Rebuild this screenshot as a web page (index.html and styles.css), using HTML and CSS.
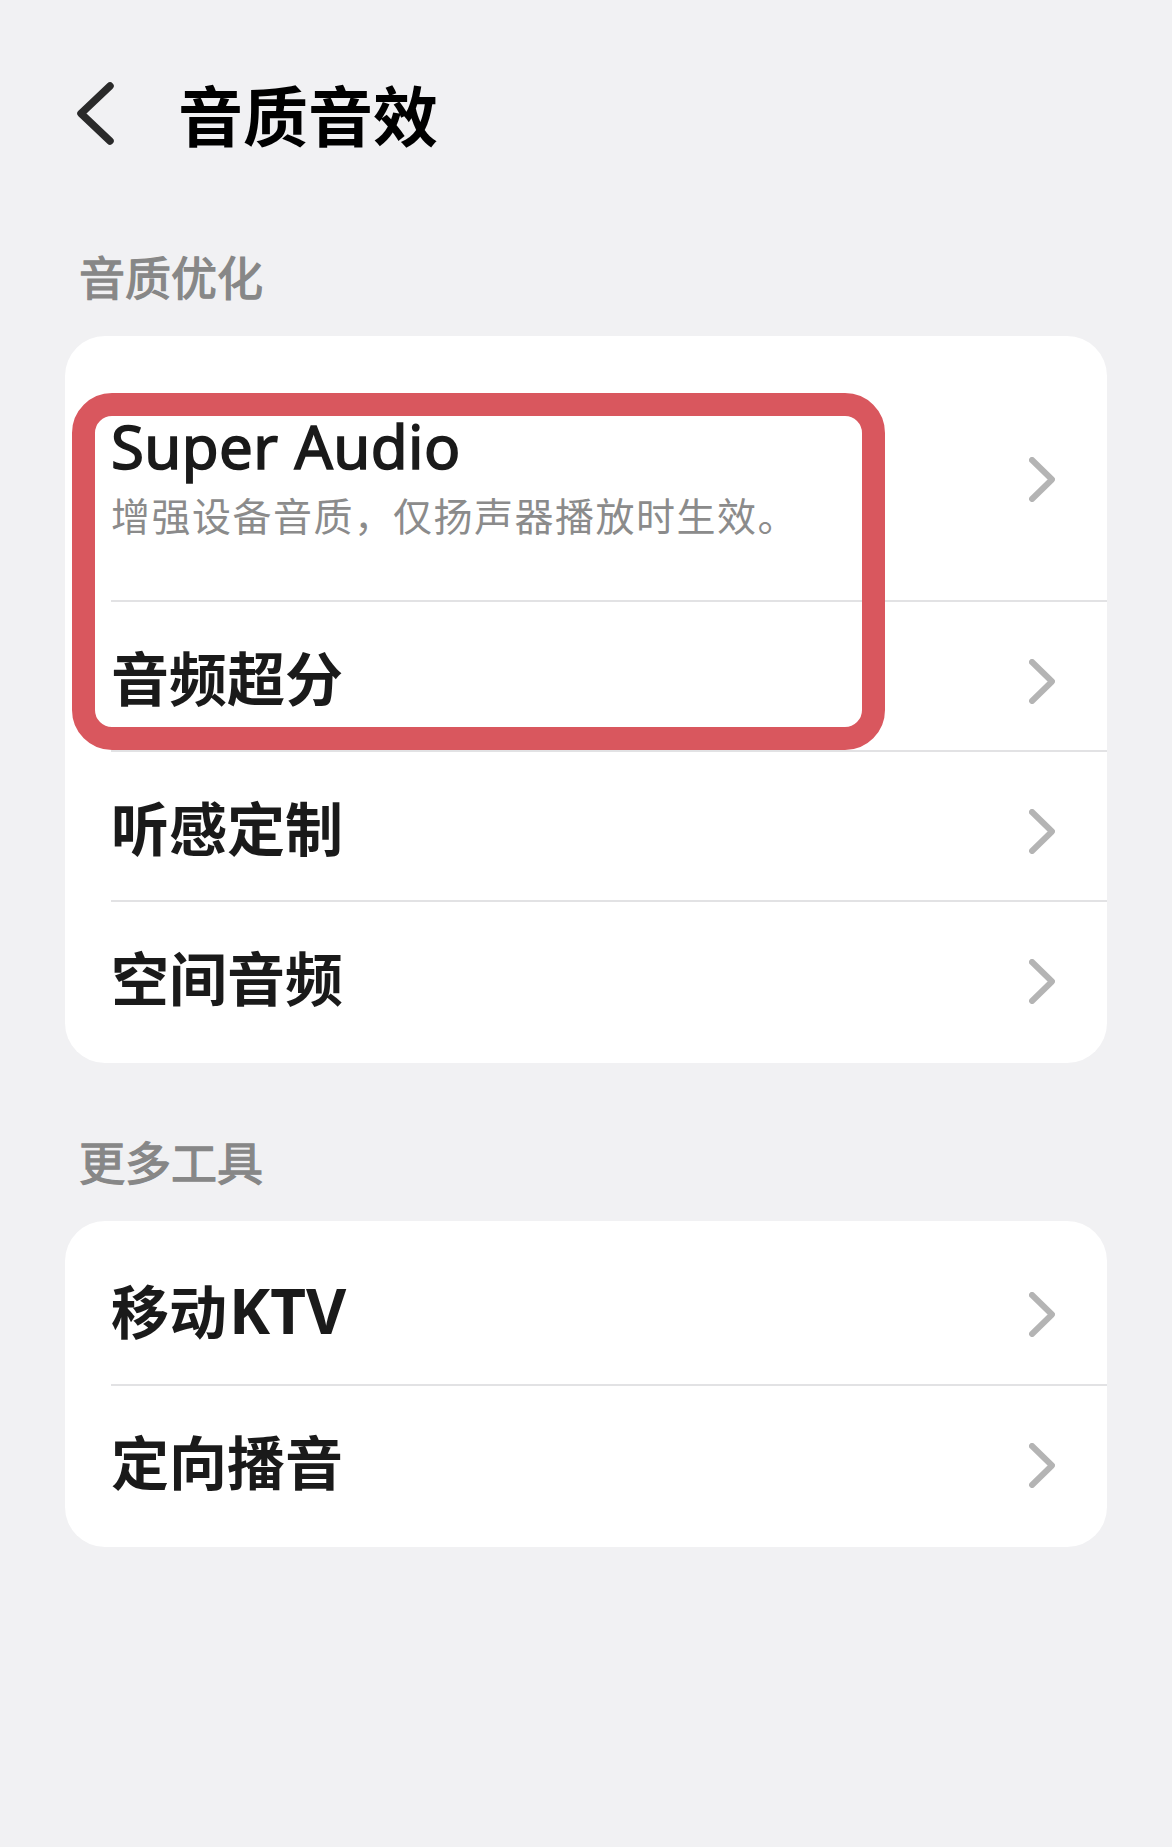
FILE: index.html
```html
<!DOCTYPE html>
<html lang="zh-CN">
<head>
<meta charset="utf-8">
<title>音质音效</title>
<link rel="stylesheet" href="styles.css">
</head>
<body>
<div class="page">
  <header class="topbar">
    <svg class="back" width="37" height="63" viewBox="0 0 37 63"><polyline points="33,4 4,31.5 33,59" fill="none" stroke="#2a2a2a" stroke-width="7.5" stroke-linecap="round" stroke-linejoin="round"/></svg>
    <h1 class="title">音质音效</h1>
  </header>

  <div class="section-label first">音质优化</div>
  <div class="card card-main">
    <div class="row row-tall">
      <div class="text">
        <div class="item-en">Super Audio</div>
        <div class="item-sub">增强设备音质<span class="punct">，</span>仅扬声器播放时生效。</div>
      </div>
      <svg class="chev" width="26" height="45" viewBox="0 0 26 45"><polyline points="3,3 23,22.5 3,42" fill="none" stroke="#b4b4b4" stroke-width="6" stroke-linecap="round" stroke-linejoin="round"/></svg>
    </div>
    <div class="row">
      <div class="item">音频超分</div>
      <svg class="chev" width="26" height="45" viewBox="0 0 26 45"><polyline points="3,3 23,22.5 3,42" fill="none" stroke="#b4b4b4" stroke-width="6" stroke-linecap="round" stroke-linejoin="round"/></svg>
    </div>
    <div class="row">
      <div class="item">听感定制</div>
      <svg class="chev" width="26" height="45" viewBox="0 0 26 45"><polyline points="3,3 23,22.5 3,42" fill="none" stroke="#b4b4b4" stroke-width="6" stroke-linecap="round" stroke-linejoin="round"/></svg>
    </div>
    <div class="row">
      <div class="item">空间音频</div>
      <svg class="chev" width="26" height="45" viewBox="0 0 26 45"><polyline points="3,3 23,22.5 3,42" fill="none" stroke="#b4b4b4" stroke-width="6" stroke-linecap="round" stroke-linejoin="round"/></svg>
    </div>
    <div class="highlight"></div>
  </div>

  <div class="section-label">更多工具</div>
  <div class="card">
    <div class="row">
      <div class="item">移动<span class="latin">KTV</span></div>
      <svg class="chev" width="26" height="45" viewBox="0 0 26 45"><polyline points="3,3 23,22.5 3,42" fill="none" stroke="#b4b4b4" stroke-width="6" stroke-linecap="round" stroke-linejoin="round"/></svg>
    </div>
    <div class="row">
      <div class="item">定向播音</div>
      <svg class="chev" width="26" height="45" viewBox="0 0 26 45"><polyline points="3,3 23,22.5 3,42" fill="none" stroke="#b4b4b4" stroke-width="6" stroke-linecap="round" stroke-linejoin="round"/></svg>
    </div>
  </div>
</div>
</body>
</html>
```

FILE: styles.css
```css
html, body {
  margin: 0;
  padding: 0;
  background: #f1f1f3;
}
body {
  font-family: "Noto Sans", "Noto Sans CJK SC", sans-serif;
  color: #1a1a1a;
  width: 1172px;
  min-height: 1847px;
  text-spacing-trim: space-all;
}
.page {
  padding: 0 65px;
}
.topbar {
  display: flex;
  align-items: center;
  padding-top: 73px;
  padding-left: 12px;
  height: 80px;
}
.back {
  display: block;
  flex: none;
}
.title {
  margin: 0 0 0 64px;
  font-family: "Noto Sans CJK SC", sans-serif;
  font-size: 65px;
  font-weight: 700;
  line-height: 80px;
  color: #000;
}
.section-label {
  font-family: "Noto Sans CJK SC", sans-serif;
  font-size: 46px;
  font-weight: 400;
  line-height: 56px;
  color: #878787;
  -webkit-text-stroke: 1.3px #878787;
  padding-left: 14px;
  margin-top: 69px;
  margin-bottom: 33px;
}
.section-label.first {
  margin-top: 94px;
}
.card {
  position: relative;
  background: #fff;
  border-radius: 40px;
  padding: 13px 0;
}
.row {
  display: flex;
  align-items: center;
  justify-content: space-between;
  margin-left: 46px;
  padding-right: 52px;
  height: 150px;
  box-sizing: border-box;
}
.row + .row {
  border-top: 2px solid #e2e2e4;
}
.row-tall {
  height: 251px;
}
.chev {
  display: block;
  flex: none;
  margin-top: 10px;
}
.item {
  font-family: "Noto Sans CJK SC", sans-serif;
  font-size: 58px;
  font-weight: 700;
  line-height: 70px;
  color: #1a1a1a;
}
.latin {
  font-family: "Noto Sans", sans-serif;
  font-size: 62px;
  margin-left: 2px;
}
.text {
  display: flex;
  flex-direction: column;
  gap: 7px;
}
.item-en {
  font-family: "Noto Sans", "Noto Sans CJK SC", sans-serif;
  font-size: 60px;
  font-weight: 400;
  line-height: 72px;
  letter-spacing: 0.4px;
  color: #1a1a1a;
  -webkit-text-stroke: 1.6px #1a1a1a;
}
.item-sub {
  font-family: "Noto Sans CJK SC", sans-serif;
  font-size: 39px;
  line-height: 51px;
  letter-spacing: 1.5px;
  color: #8b8b8b;
}
.punct {
  display: inline-block;
  width: 1em;
  text-align: left;
}
.highlight {
  position: absolute;
  left: 7px;
  top: 57px;
  width: 813px;
  height: 357px;
  box-sizing: border-box;
  border: 23px solid #d9575e;
  border-radius: 40px;
  pointer-events: none;
}
```
